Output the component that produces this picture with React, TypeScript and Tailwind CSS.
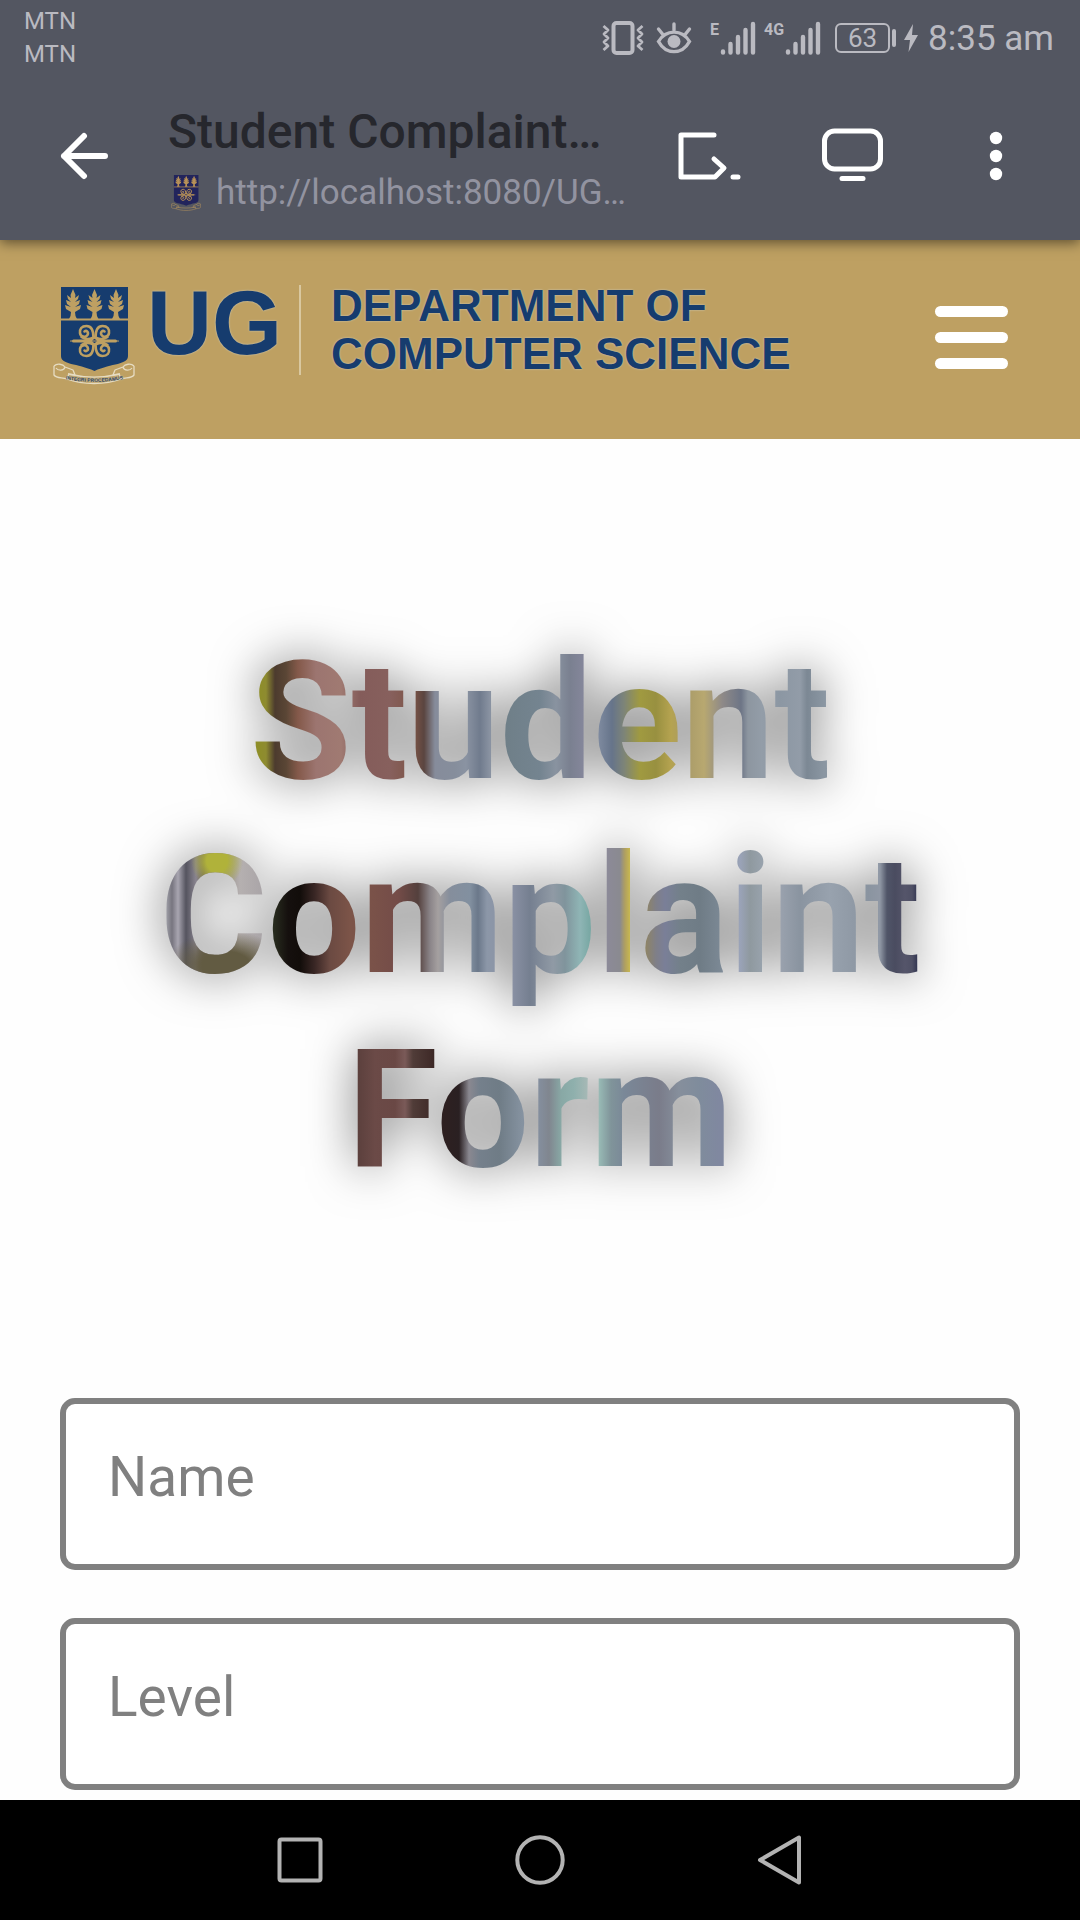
import React from "react";

type CrestProps = { className: string; shield: string; gold: string; ribbon: string; motto?: boolean };

function Crest({ className, shield, gold, ribbon, motto = false }: CrestProps) {
  return (
    <svg viewBox="0 0 82 98" className={className} preserveAspectRatio="none" aria-hidden="true">
      <path d="M8 0H75V69C75 78 59 76 41.500 84C24 76 8 78 8 69Z" fill={shield} />
      <path d="M8 32.500H75" stroke={gold} strokeWidth="2" />
      {[20, 41.5, 63].map((x) => (
        <path
          key={x}
          transform={`translate(${x} 2)`}
          d="M0 0L2.500 6L2 9L6 6L5 10L2 13L7 11L6 15L2 18L8 16L7 20L2 23L2.500 27L4 30H-4L-2.500 27L-2 23L-7 20L-8 16L-2 18L-6 15L-7 11L-2 13L-5 10L-6 6L-2 9L-2.500 6Z"
          fill={gold}
        />
      ))}
      <g transform="translate(41.500 54)" fill="none" stroke={gold} strokeWidth="2.600" strokeLinecap="round">
        <path d="M-21 0H-5M21 0H5" strokeWidth="3" />
        <path d="M-24 0H24" strokeWidth="1.200" />
        <path d="M0-4L4 0L0 4L-4 0Z" strokeWidth="2" />
        {["", "scale(-1 1)", "scale(1 -1)", "scale(-1 -1)"].map((t) => (
          <path key={t} transform={t} d="M1 -3C1 -10 3 -15 8 -15C13 -15 15 -12 14.500 -8C14 -4 9 -3 7 -6C5.500 -9 8 -11 10 -9.500M2 -3C6 -1 10 -2 13 -4" />
        ))}
      </g>
      <g fill="none" stroke={ribbon} strokeWidth="1.300" strokeLinejoin="round">
        <path d="M1 79C4 76 10 77 12 80C11 84 5 84 3 81M1 79V88C4 92 9 90 14 92L16 87M12 80L20 83L22 88L15 87" />
        <path d="M81 79C78 76 72 77 70 80C71 84 77 84 79 81M81 79V88C78 92 73 90 68 92L66 87M70 80L62 83L60 88L67 87" />
        <path d="M15 87C32 91 50 91 67 87M14 92C30 98 52 98 68 92" />
      </g>
      {motto && (
        <>
          <path id="motto-curve" d="M12 92C32 96 50 96 71 92" fill="none" />
          <text fontSize="5" fontWeight="700" fontFamily="Liberation Sans, sans-serif" fill="#2b3f5a" textAnchor="middle">
            <textPath href="#motto-curve" startOffset="50%">INTEGRI PROCEDAMUS</textPath>
          </text>
        </>
      )}
    </svg>
  );
}

function Signal({ label }: { label: string }) {
  return (
    <span className="flex items-start gap-px">
      <span className="text-base leading-[18px] font-bold">{label}</span>
      <svg viewBox="0 0 36 34" className="h-[34px] w-9" stroke="currentColor" strokeWidth="4.400" strokeLinecap="round" aria-hidden="true">
        <path d="M3 30.500V31.500M10.500 23V31.500M18 16V31.500M25.500 9V31.500M33 3V31.500" />
      </svg>
    </span>
  );
}

function StatusBar() {
  return (
    <div className="flex h-18 items-start justify-between pr-[26px] pl-6 text-[#babac1]">
      <div className="flex flex-col pt-[5px] text-2xl leading-[33px]">
        <span>MTN</span>
        <span>MTN</span>
      </div>
      <div className="flex items-center pt-4">
        <svg viewBox="0 0 42 34" className="h-[34px] w-[42px]" fill="none" stroke="currentColor" strokeLinejoin="round" aria-label="Vibrate">
          <rect x="11.500" y="2" width="19" height="30" rx="3" strokeWidth="4" />
          <path d="M1.500 5L6 9L2 13L6 17L2 21L6 25L1.500 29M40.500 5L36 9L40 13L36 17L40 21L36 25L40.500 29" strokeWidth="2.800" />
        </svg>
        <svg viewBox="0 0 36 34" className="ml-3 h-[34px] w-9" fill="none" stroke="currentColor" strokeWidth="3.400" strokeLinecap="round" aria-label="Eye comfort">
          <path d="M2.500 20.500C10 8 26 8 33.500 20.500C26 34 10 34 2.500 20.500Z" />
          <path d="M18 3V9M2.500 8L6.500 13M33.500 8L29.500 13" />
          <circle cx="18" cy="20.500" r="6.500" fill="currentColor" stroke="none" />
        </svg>
        <span className="ml-[18px]"><Signal label="E" /></span>
        <span className="ml-2"><Signal label="4G" /></span>
        <span className="ml-[14px] flex h-[30px] w-[55px] items-center justify-center rounded-md border-2 border-current text-[26px] leading-none">63</span>
        <span className="ml-0.5 h-[18px] w-1 rounded-full bg-current" />
        <svg viewBox="0 0 14 28" className="ml-2 h-7 w-3.5" fill="currentColor" aria-label="Charging">
          <path d="M9 0L0 16H6L4.500 28L14 11H8Z" />
        </svg>
        <span className="ml-2.5 pt-0.5 text-[35px] leading-[42px]">8:35 am</span>
      </div>
    </div>
  );
}

function Toolbar() {
  return (
    <div className="flex h-42 items-start">
      <button aria-label="Back" className="ml-[60px] mt-[60px] shrink-0 text-white">
        <svg viewBox="0 0 48 48" className="size-12" fill="none" stroke="currentColor" strokeWidth="6" strokeLinecap="round" strokeLinejoin="round">
          <path d="M45 24H4M24 4L4 24L24 44" />
        </svg>
      </button>
      <div className="ml-[60px] flex w-[460px] min-w-0 flex-col pt-8">
        <p className="truncate text-[48px] leading-[56px] font-medium text-[#26272d]">Student Complaint…</p>
        <div className="flex items-center pt-3">
          <Crest className="ml-[3px] h-9 w-[30px] shrink-0" shield="#22245c" gold="#b99257" ribbon="#c09a5c" />
          <p className="ml-[15px] truncate text-[35px] leading-[42px] text-[#9293a0]">http://localhost:8080/UG…</p>
        </div>
      </div>
      <div className="ml-auto flex items-start pr-[72px] pt-[54px] text-white">
        <button aria-label="Share page">
          <svg viewBox="0 0 64 60" className="h-[60px] w-16" fill="none" stroke="currentColor" strokeWidth="5" strokeLinecap="round" strokeLinejoin="round">
            <path d="M36 9H3V51H37L46 42L36 33M55 51H60" />
          </svg>
        </button>
        <button aria-label="Desktop view" className="ml-20">
          <svg viewBox="0 0 62 60" className="h-[60px] w-[62px]" fill="none" stroke="currentColor" strokeWidth="5" strokeLinecap="round">
            <rect x="2.500" y="5" width="56" height="38" rx="10" />
            <path d="M20 52.500H41" />
          </svg>
        </button>
        <button aria-label="More options" className="ml-[100px]">
          <svg viewBox="0 0 24 60" className="h-[60px] w-6" fill="currentColor">
            <circle cx="12" cy="12" r="6.200" />
            <circle cx="12" cy="30" r="6.200" />
            <circle cx="12" cy="48" r="6.200" />
          </svg>
        </button>
      </div>
    </div>
  );
}

function SiteHeader() {
  return (
    <header className="flex h-[199px] items-start justify-between bg-[#bea062] pr-[72px] pl-[53px]">
      <a href="#home" className="flex items-start pt-[42px] font-['Liberation_Sans',Arial,sans-serif] font-bold text-[#163c6e] [text-shadow:0_0_2px_#ccd0c8]">
        <Crest className="mt-[5px] h-[98px] w-[82px]" shield="#163c6e" gold="#bea062" ribbon="#e6dcc2" motto />
        <span className="ml-3 w-[137px] text-[90px] leading-[82px]">UG</span>
        <span className="ml-[15px] mt-[3px] h-[90px] w-0.5 bg-[#d9c8a0]" />
        <span className="ml-[30px] flex flex-col text-[44px] leading-12 whitespace-nowrap">
          <span>DEPARTMENT OF</span>
          <span>COMPUTER SCIENCE</span>
        </span>
      </a>
      <button aria-label="Menu" className="mt-[66px] flex w-[73px] flex-col gap-[15px]">
        <span className="h-[11px] rounded-full bg-white" />
        <span className="h-[11px] rounded-full bg-white" />
        <span className="h-[11px] rounded-full bg-white" />
      </button>
    </header>
  );
}

function Title() {
  return (
    <h1 className="mt-[186px] flex flex-col items-center text-[165px] leading-[194px] font-bold text-transparent drop-shadow-[0_0_24px_rgba(0,0,0,0.55)]">
      <span className="bg-clip-text bg-[linear-gradient(90deg,#8e8e28_8px,#8e8b30_16px,#4c3b2e_25px,#5a4635_36px,#84594a_48px,#9c7570_66px,#a07a72_91px,#845c5a_110px,#87605d_140px,#7d5547_163px,#5a4540_174px,#868c9b_185px,#868e9c_205px,#8a93a2_216px,#707b8d_230px,#8a93a2_240px,#6f7f88_255px,#748490_290px,#8993a0_306px,#7a8090_320px,#84869a_333px,#7f8ba0_348px,#66748a_362px,#7d8478_374px,#a09a40_390px,#989040_406px,#b5a350_421px,#a89a68_436px,#b8a870_454px,#8f8a88_472px,#6d7586_491px,#8d96a0_498px,#939da8_512px,#8c97a3_530px,#929ca8_550px,#7c8894_557px,#8a96a2_574px)]">
        Student
      </span>
      <span className="bg-clip-text bg-[radial-gradient(26px_28px_at_57px_42px,#b0b23a_40%,transparent),radial-gradient(60px_34px_at_66px_146px,#625b42_40%,transparent),linear-gradient(90deg,#a0a0a8_6px,#77757f_12px,#a8a5b0_18px,#55545f_26px,#8a8590_36px,#6a6058_44px,#b5b0b0_80px,#aaa5a8_102px,#2a2f20_112px,#15100e_128px,#120d0a_140px,#3a2725_155px,#6b4a42_170px,#7c5448_190px,#7a5249_212px,#744c48_238px,#54403d_258px,#8a8488_270px,#a5a0a0_278px,#858e9c_290px,#8290a0_310px,#6b788a_318px,#8c97a8_327px,#8a91a4_352px,#757f90_370px,#909aa5_393px,#80949c_405px,#8fb5b5_420px,#74a5a0_432px,#8c8a98_447px,#8a8a90_460px,#b0a060_465px,#c8b850_470px,#918560_484px,#7f7f88_496px,#7a7f98_505px,#73808a_520px,#6f7c86_540px,#7b8894_560px,#9aa3b8_580px,#8f999f_590px,#98a2ac_602px,#9aa2ae_620px,#8a94a0_640px,#98a2ae_670px,#8a94a0_708px,#9098a5_720px,#505568_727px,#4a4c60_735px,#55556a_745px,#4f5065_752px,#303350_758px)]">
        Complaint
      </span>
      <span className="bg-clip-text bg-[linear-gradient(90deg,#5a3f3c_9px,#6b4a47_28px,#6a4845_48px,#7a5a58_58px,#503c38_66px,#3f2a28_85px,#2e2020_94px,#2a2022_112px,#8a8890_122px,#75808c_132px,#6f7c86_152px,#8592a0_175px,#8590a0_190px,#80868f_202px,#88a8a5_214px,#8fb0ad_227px,#a5b8b5_240px,#98bab5_252px,#80949a_264px,#7a8898_277px,#7a7c8a_312px,#868f9c_332px,#7f8c9c_352px,#8088a0_372px)]">
        Form
      </span>
    </h1>
  );
}

function Field({ label }: { label: string }) {
  return (
    <input
      type="text"
      aria-label={label}
      placeholder={label}
      className="block h-43 w-full rounded-[15px] border-6 border-[#808080] bg-white px-[42px] pb-3.5 text-[55px] text-[#333] outline-none placeholder:text-[#808080]"
    />
  );
}

function NavBar() {
  return (
    <nav className="sticky bottom-0 mt-auto h-30 bg-black text-[#b3b3b3]">
      <div className="mx-auto grid h-full w-2/3 grid-cols-3 place-items-center">
        <button aria-label="Recent apps">
          <svg viewBox="0 0 50 50" className="size-[50px]" fill="none" stroke="currentColor" strokeWidth="4">
            <rect x="4.500" y="4.500" width="41" height="41" rx="2" />
          </svg>
        </button>
        <button aria-label="Home">
          <svg viewBox="0 0 50 50" className="size-[50px]" fill="none" stroke="currentColor" strokeWidth="4">
            <circle cx="25" cy="25" r="22.700" />
          </svg>
        </button>
        <button aria-label="Back">
          <svg viewBox="0 0 50 50" className="size-[50px]" fill="none" stroke="currentColor" strokeWidth="4" strokeLinejoin="round">
            <path d="M44 2.500V47.500L5 25Z" />
          </svg>
        </button>
      </div>
    </nav>
  );
}

export default function App() {
  return (
    <div className="flex min-h-screen flex-col bg-[#fefefe] font-[Roboto,sans-serif]">
      <div className="relative z-10 bg-[#535661] shadow-[0_3px_12px_rgba(0,0,0,0.5)]">
        <StatusBar />
        <Toolbar />
      </div>
      <SiteHeader />
      <main className="pb-2.5">
        <Title />
        <form className="mt-[191px] flex flex-col gap-12 px-[60px]">
          <Field label="Name" />
          <Field label="Level" />
        </form>
      </main>
      <NavBar />
    </div>
  );
}
